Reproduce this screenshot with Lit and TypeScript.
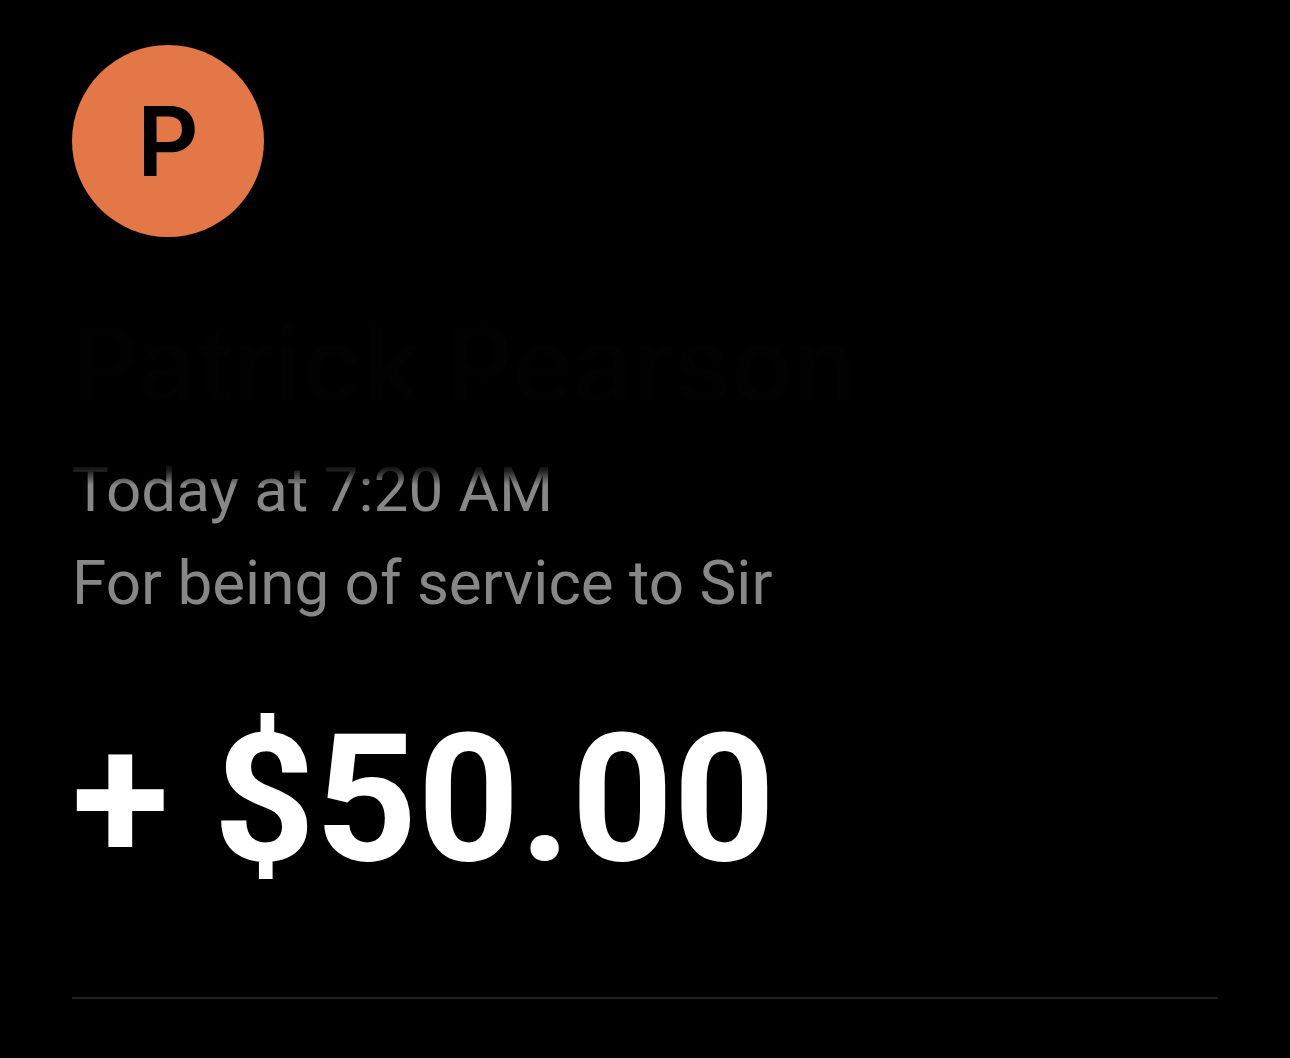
import { LitElement, html, css } from "lit";

class AppRoot extends LitElement {
  static styles = css`
    :host {
      display: block;
      min-height: 100vh;
      box-sizing: border-box;
      padding: 45px 72px 0;
      background: #000;
      color: #fff;
      font-family: Roboto, "Liberation Sans", sans-serif;
      white-space: nowrap;
    }
    .avatar {
      display: grid;
      place-items: center;
      width: 192px;
      height: 192px;
      border-radius: 50%;
      background: #e37748;
      color: #000;
      font-family: Inter, "Liberation Sans", sans-serif;
      font-size: 96px;
      font-weight: 600;
      line-height: 96px;
    }
    h1 {
      margin: 68px 0 0;
      font-family: Inter, "Liberation Sans", sans-serif;
      font-size: 103px;
      font-weight: 600;
      line-height: 120px;
      color: #020202;
    }
    p {
      margin: 0;
      font-size: 62px;
      font-weight: 400;
      line-height: 93px;
      color: #878787;
    }
    .time {
      margin-top: 18px;
      background: linear-gradient(#000 20px, #222 28px, #878787 42px);
      background-clip: text;
      -webkit-background-clip: text;
      color: transparent;
    }
    .amount {
      margin-top: 64px;
      font-size: 178px;
      font-weight: 700;
      line-height: 212px;
      color: #fff;
    }
    hr {
      margin: 92px 0 0;
      border: 0;
      height: 2px;
      background: #222;
    }
  `;

  render() {
    return html`
      <main>
        <div class="avatar">P</div>
        <h1>Patrick Pearson</h1>
        <p class="time">Today at 7:20 AM</p>
        <p>For being of service to Sir</p>
        <p class="amount">+ $50.00</p>
        <hr />
      </main>
    `;
  }
}
customElements.define("app-root", AppRoot);
